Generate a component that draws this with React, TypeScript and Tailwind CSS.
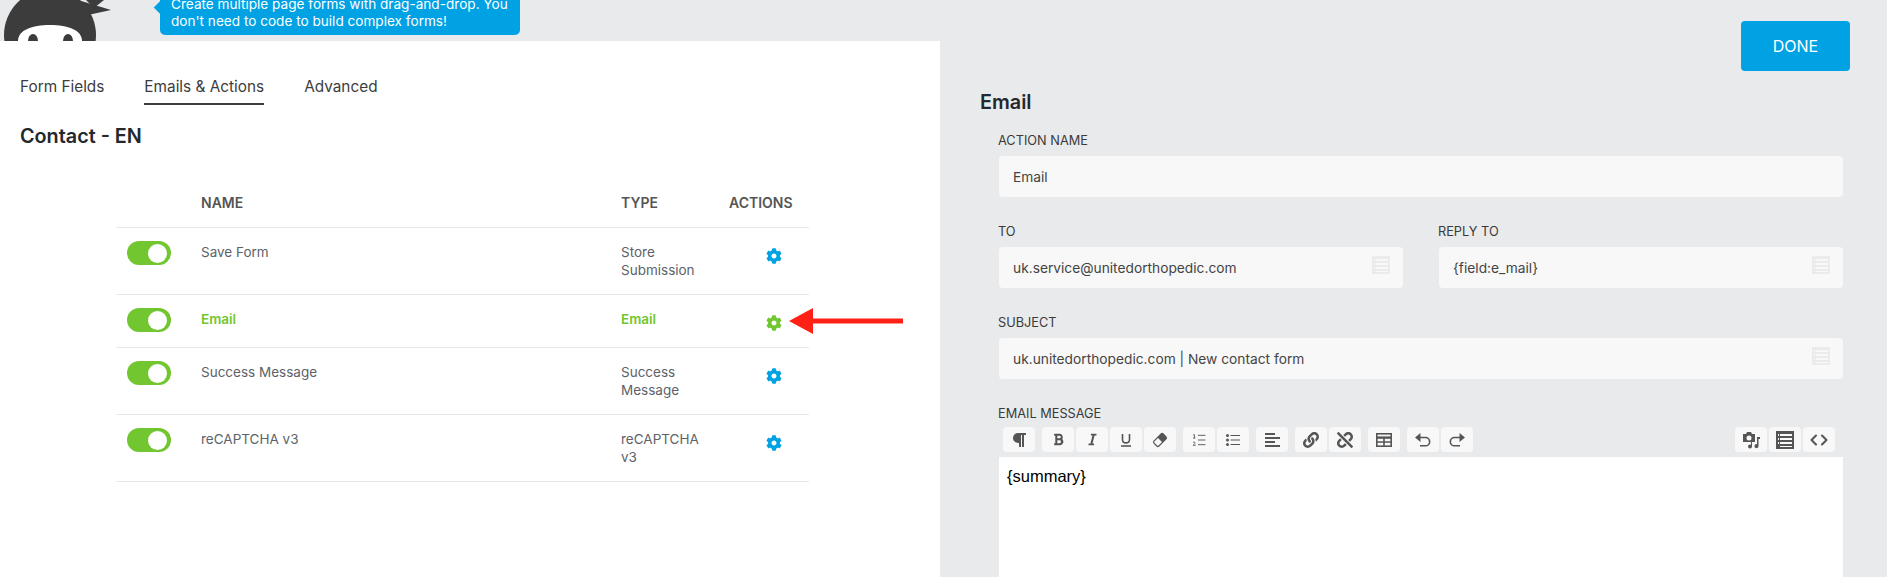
import { Code, ListOrdered } from "lucide-react";
import { FaBold, FaCog, FaItalic, FaLink, FaParagraph, FaUnlink } from "react-icons/fa";
import type { ReactNode } from "react";

const rows = [
  { name: "Save Form", type: "Store Submission" },
  { name: "Email", type: "Email", active: true },
  { name: "Success Message", type: "Success Message" },
  { name: "reCAPTCHA v3", type: "reCAPTCHA v3" },
];

function NinjaLogo() {
  return (
    <svg width="112" height="41" viewBox="0 0 112 41" className="shrink-0">
      <circle cx="48" cy="35" r="46" fill="#3c3c3c" />
      <path d="M76 0 L109 10 L86 15 L78 20 Z" fill="#3c3c3c" />
      <path d="M84 0 L102 0 L92 8 Z" fill="#3c3c3c" />
      <path d="M16 41 C16 30 30 25 48 25 C66 25 80 30 80 41 Z" fill="#fff" />
      <ellipse cx="31" cy="41" rx="5" ry="7" fill="#3c3c3c" />
      <ellipse cx="66" cy="41" rx="5" ry="7" fill="#3c3c3c" />
    </svg>
  );
}

function Toggle() {
  return (
    <div className="flex h-6 w-11 items-center justify-end rounded-full bg-[#72c62f] pr-[4px]">
      <div className="h-[19px] w-[19px] rounded-full bg-white" />
    </div>
  );
}

function Arrow() {
  return (
    <svg width="114" height="26" viewBox="0 0 114 26">
      <path d="M0 13 L24 0 L24 10.5 L114 10.5 L114 15.5 L24 15.5 L24 26 Z" fill="#ff2116" />
    </svg>
  );
}

function MergeIcon({ className }: { className: string }) {
  return (
    <svg width="18" height="18" viewBox="0 0 18 18" className={className}>
      <path
        fill="currentColor"
        fillRule="evenodd"
        d="M0 0H18V18H0Z M4 3V5H16V3Z M4 7V9H16V7Z M4 11V13H16V11Z M4 15V16H16V15Z M2 3V5H3V3Z M2 7V9H3V7Z M2 11V13H3V11Z"
      />
    </svg>
  );
}

function Field({ label, value, tag, className }: { label: string; value: string; tag?: boolean; className?: string }) {
  return (
    <div className={className}>
      <div className="mb-[7px] -ml-px h-[18px] text-[12.75px] leading-[20px] text-[#3a3a3a]">{label}</div>
      <div className="relative flex h-[41px] items-center rounded-[4px] bg-[#f8f8f8] pl-[14px] pt-[2px] text-[13.75px] text-[#444]">
        {value}
        {tag && <MergeIcon className="absolute right-[13px] top-[9px] text-[#ebebeb]" />}
      </div>
    </div>
  );
}

function ToolBtn({ children }: { children: ReactNode }) {
  return (
    <div className="flex h-[25px] w-8 items-center justify-center rounded-[4px] bg-[#f8f8f8] text-[#555]">
      {children}
    </div>
  );
}

function Group({ children }: { children: ReactNode }) {
  return <div className="flex gap-[2px]">{children}</div>;
}

export default function App() {
  return (
    <div className="flex h-[577px] w-[1887px] overflow-hidden bg-[#e9eaec] font-['Inter',sans-serif]">
      {/* left column */}
      <div className="flex w-[940px] shrink-0 flex-col">
        <div className="flex h-[41px] shrink-0 items-end gap-[48px] pb-[6px] pl-[2px]">
          <div className="-mb-[6px]">
            <NinjaLogo />
          </div>
          <div className="relative -ml-[2px] w-[360px] shrink-0 rounded-b-[5px] bg-[#00a2e4] px-[11px] pb-[5px] text-[13.6px] leading-[17px] text-white">
            <div className="absolute -left-[4px] top-[6px] h-[11px] w-[11px] rotate-45 bg-[#00a2e4]" />
            <div className="relative">
              Create multiple page forms with drag-and-drop. You don't need to code to build complex forms!
            </div>
          </div>
        </div>

        <div className="flex-1 bg-white">
          <div className="flex gap-10 pl-5 pt-[34px] text-[15.35px] leading-[23px] text-[#3c3c3c]">
            <div className="border-b-2 border-transparent pb-[5px]">Form Fields</div>
            <div className="border-b-2 border-[#3c3c3c] pb-[5px]">Emails &amp; Actions</div>
            <div className="border-b-2 border-transparent pb-[5px]">Advanced</div>
          </div>
          <h1 className="mt-[18px] pl-5 text-[19.8px] font-semibold leading-[27px] text-[#23282d]">Contact - EN</h1>

          <div className="ml-[116px] mt-[44px] w-[693px]">
            <div className="grid grid-cols-[85px_420px_108px_80px] border-b border-[#e7e7e7] pb-[15px] text-[14px] font-semibold leading-[18px] text-[#555]">
              <div />
              <div>NAME</div>
              <div>TYPE</div>
              <div>ACTIONS</div>
            </div>
            {rows.map((row) => (
              <div
                key={row.name}
                className={`relative grid grid-cols-[85px_420px_108px_80px] border-b border-[#e7e7e7] pb-[15px] text-[13.5px] leading-[18px] ${
                  row.active ? "font-semibold text-[#72c62f]" : "text-[#5d6268]"
                }`}
              >
                <div className="pl-[11px] pt-[13px]">
                  <Toggle />
                </div>
                <div className="pt-[15px]">{row.name}</div>
                <div className="w-[82px] pt-[15px]">{row.type}</div>
                <div className="pl-[37px] pt-[20px]">
                  <FaCog size={16} className={row.active ? "text-[#72c62f]" : "text-[#00a2e4]"} />
                </div>
                {row.active && (
                  <div className="absolute left-[673px] top-[13px]">
                    <Arrow />
                  </div>
                )}
              </div>
            ))}
          </div>
        </div>
      </div>

      {/* right column */}
      <div className="flex flex-1 flex-col pl-[59px] pr-[44px]">
        <div className="flex justify-end pt-[21px]">
          <button className="-mr-[7px] h-[50px] w-[109px] rounded-[4px] bg-[#00a2e4] text-[16px] text-white">DONE</button>
        </div>
        <h2 className="-ml-[19px] mt-[18px] text-[19.8px] font-semibold leading-[27px] text-[#23282d]">Email</h2>
        <div className="mt-[15px]">
          <Field label="ACTION NAME" value="Email" />
          <div className="mt-[25px] flex gap-9">
            <Field label="TO" value="uk.service@unitedorthopedic.com" tag className="w-[404px]" />
            <Field label="REPLY TO" value="{field:e_mail}" tag className="w-[404px]" />
          </div>
          <Field label="SUBJECT" value="uk.unitedorthopedic.com | New contact form" tag className="mt-[25px]" />
        </div>

        <div className="-ml-px mt-[25px] flex flex-1 flex-col">
          <div className="mb-[5px] h-[18px] text-[12.75px] leading-[20px] text-[#3a3a3a]">EMAIL MESSAGE</div>
          <div className="flex justify-between pl-[5px] pr-[8px]">
            <div className="flex gap-[7px]">
              <Group>
                <ToolBtn>
                  <FaParagraph size={16} />
                </ToolBtn>
              </Group>
              <Group>
                <ToolBtn>
                  <FaBold size={13} />
                </ToolBtn>
                <ToolBtn>
                  <FaItalic size={13} />
                </ToolBtn>
                <ToolBtn>
                  <svg width="12" height="14" viewBox="0 0 12 14" fill="none" stroke="currentColor" strokeWidth="1.6">
                    <path d="M2.5 1V6.5C2.5 11 9.5 11 9.5 6.5V1" />
                    <path d="M1 13H11" />
                  </svg>
                </ToolBtn>
                <ToolBtn>
                  <svg width="16" height="16" viewBox="0 0 16 16">
                    <g transform="rotate(-45 8 8)">
                      <rect x="1.5" y="4.5" width="13" height="7" rx="1.5" fill="none" stroke="currentColor" strokeWidth="1.2" />
                      <path d="M8 4.5H13A1.5 1.5 0 0 1 14.5 6V10A1.5 1.5 0 0 1 13 11.5H8Z" fill="currentColor" />
                    </g>
                  </svg>
                </ToolBtn>
              </Group>
              <Group>
                <ToolBtn>
                  <ListOrdered size={16} strokeWidth={1.4} />
                </ToolBtn>
                <ToolBtn>
                  <svg width="14" height="12" viewBox="0 0 14 12" fill="currentColor">
                    <circle cx="1.5" cy="1.5" r="1.5" />
                    <circle cx="1.5" cy="6" r="1.5" />
                    <circle cx="1.5" cy="10.5" r="1.5" />
                    <rect x="4.5" y="1" width="9.5" height="1" />
                    <rect x="4.5" y="5.5" width="9.5" height="1" />
                    <rect x="4.5" y="10" width="9.5" height="1" />
                  </svg>
                </ToolBtn>
              </Group>
              <Group>
                <ToolBtn>
                  <svg width="15" height="14" viewBox="0 0 15 14" fill="currentColor">
                    <rect x="0" y="0" width="10" height="2" />
                    <rect x="0" y="4" width="15" height="2" />
                    <rect x="0" y="8" width="10" height="2" />
                    <rect x="0" y="12" width="15" height="2" />
                  </svg>
                </ToolBtn>
              </Group>
              <Group>
                <ToolBtn>
                  <FaLink size={16} />
                </ToolBtn>
                <ToolBtn>
                  <FaUnlink size={16} />
                </ToolBtn>
              </Group>
              <Group>
                <ToolBtn>
                  <svg width="16" height="14" viewBox="0 0 16 14" fill="none" stroke="currentColor" strokeWidth="1.6">
                    <rect x="0.8" y="0.8" width="14.4" height="12.4" />
                    <path d="M0.8 4.6H15.2" strokeWidth="2.4" />
                    <path d="M0.8 9H15.2M8 4.6V13.2" />
                  </svg>
                </ToolBtn>
              </Group>
              <Group>
                <ToolBtn>
                  <svg width="16" height="14" viewBox="0 0 16 14">
                    <path d="M0 4.5L5.5 0V9Z" fill="currentColor" />
                    <path d="M5 4.5H10.5A4 4 0 0 1 10.5 12.8H5" fill="none" stroke="currentColor" strokeWidth="1.6" />
                  </svg>
                </ToolBtn>
                <ToolBtn>
                  <svg width="16" height="14" viewBox="0 0 16 14">
                    <path d="M16 4.5L10.5 0V9Z" fill="currentColor" />
                    <path d="M11 4.5H5.5A4 4 0 0 0 5.5 12.8H11" fill="none" stroke="currentColor" strokeWidth="1.6" />
                  </svg>
                </ToolBtn>
              </Group>
            </div>
            <Group>
              <ToolBtn>
                <svg width="18" height="18" viewBox="0 0 18 18" fill="currentColor">
                  <path
                    fillRule="evenodd"
                    d="M1 3H4L5 1H9L10 3H13V11H1Z M7 4.5A2.5 2.5 0 1 0 7 9.5A2.5 2.5 0 1 0 7 4.5Z"
                  />
                  <path d="M15 6H18V8H16.5V15A2 2 0 1 1 15 13.2Z" />
                  <circle cx="8" cy="15.5" r="2" />
                  <path d="M9 11H10V15.5H9Z" />
                </svg>
              </ToolBtn>
              <ToolBtn>
                <MergeIcon className="" />
              </ToolBtn>
              <ToolBtn>
                <Code size={18} strokeWidth={2.8} />
              </ToolBtn>
            </Group>
          </div>
          <div className="ml-px mt-[5px] flex-1 bg-white pl-2 pt-[8px] font-['Liberation_Sans',sans-serif] text-[16.5px] leading-[22px] text-black">
            {"{summary}"}
          </div>
        </div>
      </div>
    </div>
  );
}
